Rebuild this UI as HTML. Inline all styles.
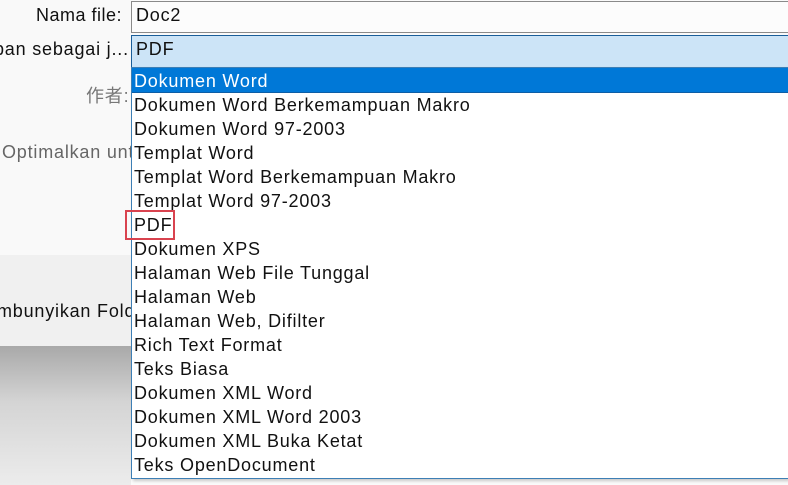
<!DOCTYPE html>
<html><head><style>
body{margin:0;width:788px;height:485px;overflow:hidden;position:relative;background:#fafafa;font-family:"Liberation Sans","Noto Sans CJK SC",sans-serif;font-size:18px;letter-spacing:.8px;color:#111}
.a{position:absolute;white-space:nowrap}
</style></head><body>
<div class="a" style="left:0;top:0;width:131px;height:255px;background:#f9f9f9"></div>
<div class="a" style="left:0;top:255px;width:131px;height:91px;background:#f0f0f0"></div>
<div class="a" style="left:0;top:346px;width:131px;height:139px;background:linear-gradient(#a9a9a9,#d4d4d4 40%,#ececec)"></div>
<div class="a" style="left:36px;top:5px;letter-spacing:.5px">Nama file:</div>
<div class="a" style="left:-6px;top:39px">pan sebagai j...</div>
<div class="a" style="left:86px;top:82px;color:#777">作者:</div>
<div class="a" style="left:2px;top:142px;color:#666">Optimalkan unt</div>
<div class="a" style="left:-3px;top:301px">mbunyikan Fold</div>
<div class="a" style="left:131px;top:1px;width:657px;height:30px;border:1px solid #8a8a8a;border-right:0;background:#fcfcfc"></div>
<div class="a" style="left:136px;top:5px">Doc2</div>
<div class="a" style="left:131px;top:35px;width:657px;height:31px;border:1px solid #1a5e9a;border-right:0;background:#cce4f7"></div>
<div class="a" style="left:136px;top:39px">PDF</div>
<div class="a" style="left:131px;top:67px;width:656px;height:410px;border:1px solid #3d7fb5;border-right:0;background:#fff;box-shadow:2px 2px 3px rgba(0,0,0,.2)"></div>
<div class="a" style="left:132px;top:68px;width:656px;height:24px;background:#0078d7;border-bottom:1px solid #0d5ea6"></div>
<div class="a" style="left:134px;top:69px;line-height:24px">
<div style="color:#fff">Dokumen Word</div>
<div>Dokumen Word Berkemampuan Makro</div>
<div>Dokumen Word 97-2003</div>
<div>Templat Word</div>
<div>Templat Word Berkemampuan Makro</div>
<div>Templat Word 97-2003</div>
<div>PDF</div>
<div>Dokumen XPS</div>
<div>Halaman Web File Tunggal</div>
<div>Halaman Web</div>
<div>Halaman Web, Difilter</div>
<div>Rich Text Format</div>
<div>Teks Biasa</div>
<div>Dokumen XML Word</div>
<div>Dokumen XML Word 2003</div>
<div>Dokumen XML Buka Ketat</div>
<div>Teks OpenDocument</div>
</div>
<div class="a" style="left:125px;top:210px;width:46px;height:26px;border:2px solid #d9434f"></div>
</body></html>
